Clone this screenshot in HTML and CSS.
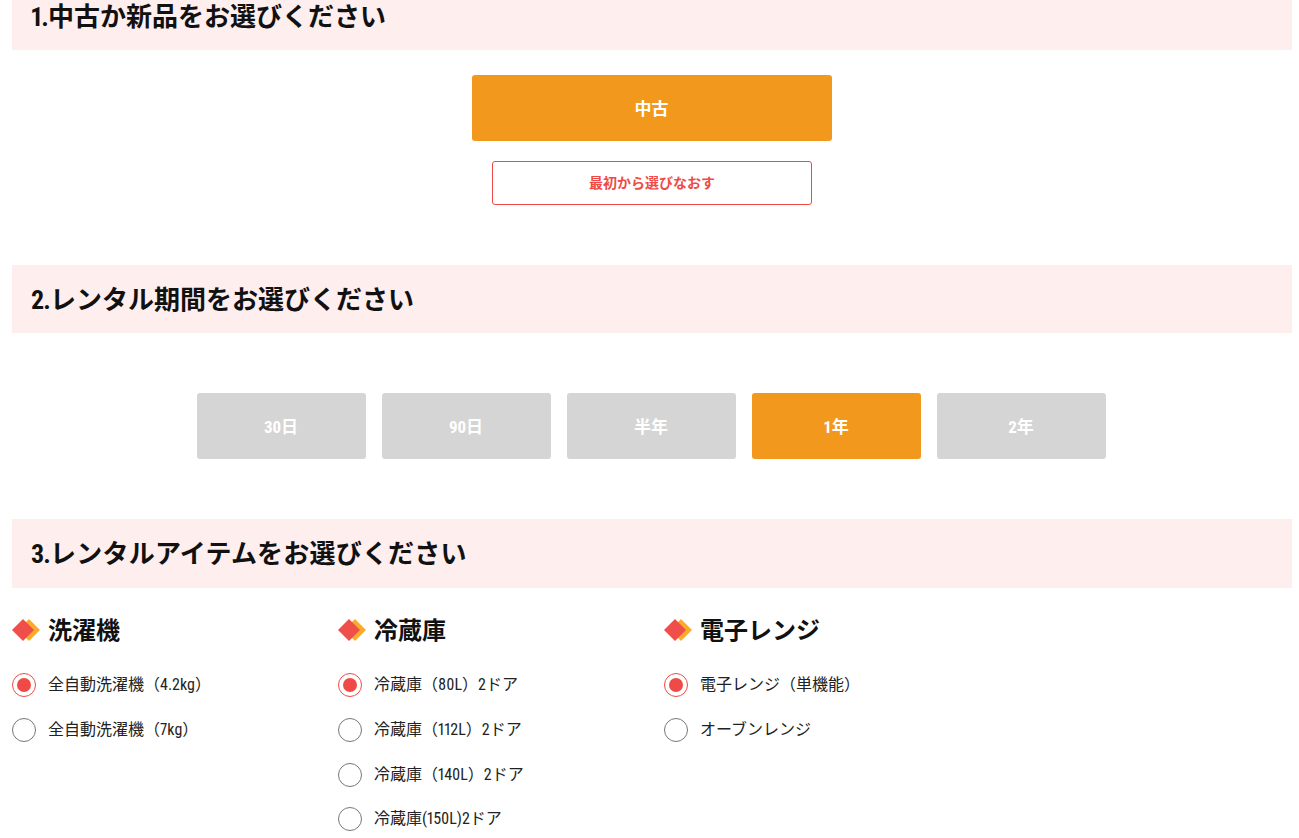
FILE: index.html
```html
<!DOCTYPE html>
<html lang="ja">
<head>
<meta charset="utf-8">
<title>レンタル</title>
<link rel="stylesheet" href="styles.css">
</head>
<body>
<main class="page">
  <section class="step step-first">
    <h2 class="band"><span class="num">1.</span>中古か新品をお選びください</h2>
    <div class="choice-main"><button class="btn btn-main is-on">中古</button></div>
    <div class="choice-reset"><button class="btn-reset">最初から選びなおす</button></div>
  </section>
  <section class="step step-period">
    <h2 class="band"><span class="num">2.</span>レンタル期間をお選びください</h2>
    <div class="periods">
      <button class="btn btn-period">30日</button>
      <button class="btn btn-period">90日</button>
      <button class="btn btn-period">半年</button>
      <button class="btn btn-period is-on">1年</button>
      <button class="btn btn-period">2年</button>
    </div>
  </section>
  <section class="step step-items">
    <h2 class="band band-tall"><span class="num">3.</span>レンタルアイテムをお選びください</h2>
    <div class="items">
      <div class="col">
        <h3 class="cat"><svg class="mark" viewBox="0 0 28 22" aria-hidden="true"><path class="m-back" d="M17 0 28 11 17 22 6 11Z"/><path class="m-front" d="M11 0 22 11 11 22 0 11Z"/></svg>洗濯機</h3>
        <ul class="opts">
          <li class="opt is-sel"><span class="radio"></span>全自動洗濯機（4.2kg）</li>
          <li class="opt"><span class="radio"></span>全自動洗濯機（7kg）</li>
        </ul>
      </div>
      <div class="col">
        <h3 class="cat"><svg class="mark" viewBox="0 0 28 22" aria-hidden="true"><path class="m-back" d="M17 0 28 11 17 22 6 11Z"/><path class="m-front" d="M11 0 22 11 11 22 0 11Z"/></svg>冷蔵庫</h3>
        <ul class="opts">
          <li class="opt is-sel"><span class="radio"></span>冷蔵庫（80L）2ドア</li>
          <li class="opt"><span class="radio"></span>冷蔵庫（112L）2ドア</li>
          <li class="opt"><span class="radio"></span>冷蔵庫（140L）2ドア</li>
          <li class="opt"><span class="radio"></span>冷蔵庫(150L)2ドア</li>
        </ul>
      </div>
      <div class="col">
        <h3 class="cat"><svg class="mark" viewBox="0 0 28 22" aria-hidden="true"><path class="m-back" d="M17 0 28 11 17 22 6 11Z"/><path class="m-front" d="M11 0 22 11 11 22 0 11Z"/></svg>電子レンジ</h3>
        <ul class="opts">
          <li class="opt is-sel"><span class="radio"></span>電子レンジ（単機能）</li>
          <li class="opt"><span class="radio"></span>オーブンレンジ</li>
        </ul>
      </div>
    </div>
  </section>
</main>
</body>
</html>
```
FILE: styles.css
```css
* { box-sizing: border-box; }
html, body { margin: 0; height: 100%; overflow: hidden; background: #fff; }
body { font-family: Roboto, "Noto Sans CJK JP", sans-serif; font-stretch: 80%; font-variant-numeric: proportional-nums; color: #111; }
.page { padding: 0 7px 0 12px; margin-top: -18px; }
.band {
  margin: 0; height: 68px; padding: 2px 0 0 19px; line-height: 66px;
  background: #feeeee; font-size: 26px; font-weight: 700; letter-spacing: 0; color: #111;
}
.num { letter-spacing: -.8px; }
.band-tall { height: 69px; letter-spacing: .2px; }
.btn {
  border: 0; border-radius: 3px; color: #fff; font-family: inherit; font-stretch: inherit; font-weight: 700;
  font-size: 17px; height: 66px; background: #d5d5d5; letter-spacing: 0; padding: 0 1px 2px 0;
}
.btn.is-on { background: #f2981d; }
.choice-main { display: flex; justify-content: center; margin-top: 25px; }
.btn-main { width: 360px; }
.choice-reset { display: flex; justify-content: center; margin-top: 20px; }
.btn-reset {
  width: 320px; height: 44px; background: #fff; border: 1px solid #ef4a45; border-radius: 3px;
  color: #ef4a45; font-family: inherit; font-size: 14px; font-weight: 700; padding: 0 0 2px;
}
.step-period { margin-top: 60px; }
.periods { display: flex; justify-content: center; gap: 16px; margin-top: 60px; padding-right: 1px; }
.btn-period { width: 169px; }
.step-items { margin-top: 60px; }
.items { display: flex; margin-top: 27px; }
.col { width: 326px; flex: none; }
.cat {
  margin: 0; display: flex; align-items: flex-start; gap: 8px; height: 30px; line-height: 33px;
  font-size: 24px; font-weight: 700; color: #111;
}
.mark { width: 28px; height: 22px; flex: none; margin-top: 4px; }
.m-front { fill: #f04e4a; }
.m-back { fill: #fbab2a; }
.opts { list-style: none; margin: 28px 0 0; padding: 0; }
.opt {
  display: flex; align-items: flex-start; gap: 12px; height: 24px; line-height: 24px; margin-bottom: 20.8px;
  font-size: 16px; color: #222;
}
.radio {
  width: 24px; height: 24px; flex: none; border-radius: 50%; border: 1px solid #777; background: #fff;
  display: flex; align-items: center; justify-content: center;
}
.is-sel .radio { border-color: #ef4a45; }
.is-sel .radio::after { content: ""; width: 14px; height: 14px; border-radius: 50%; background: #ef4a45; }
```
